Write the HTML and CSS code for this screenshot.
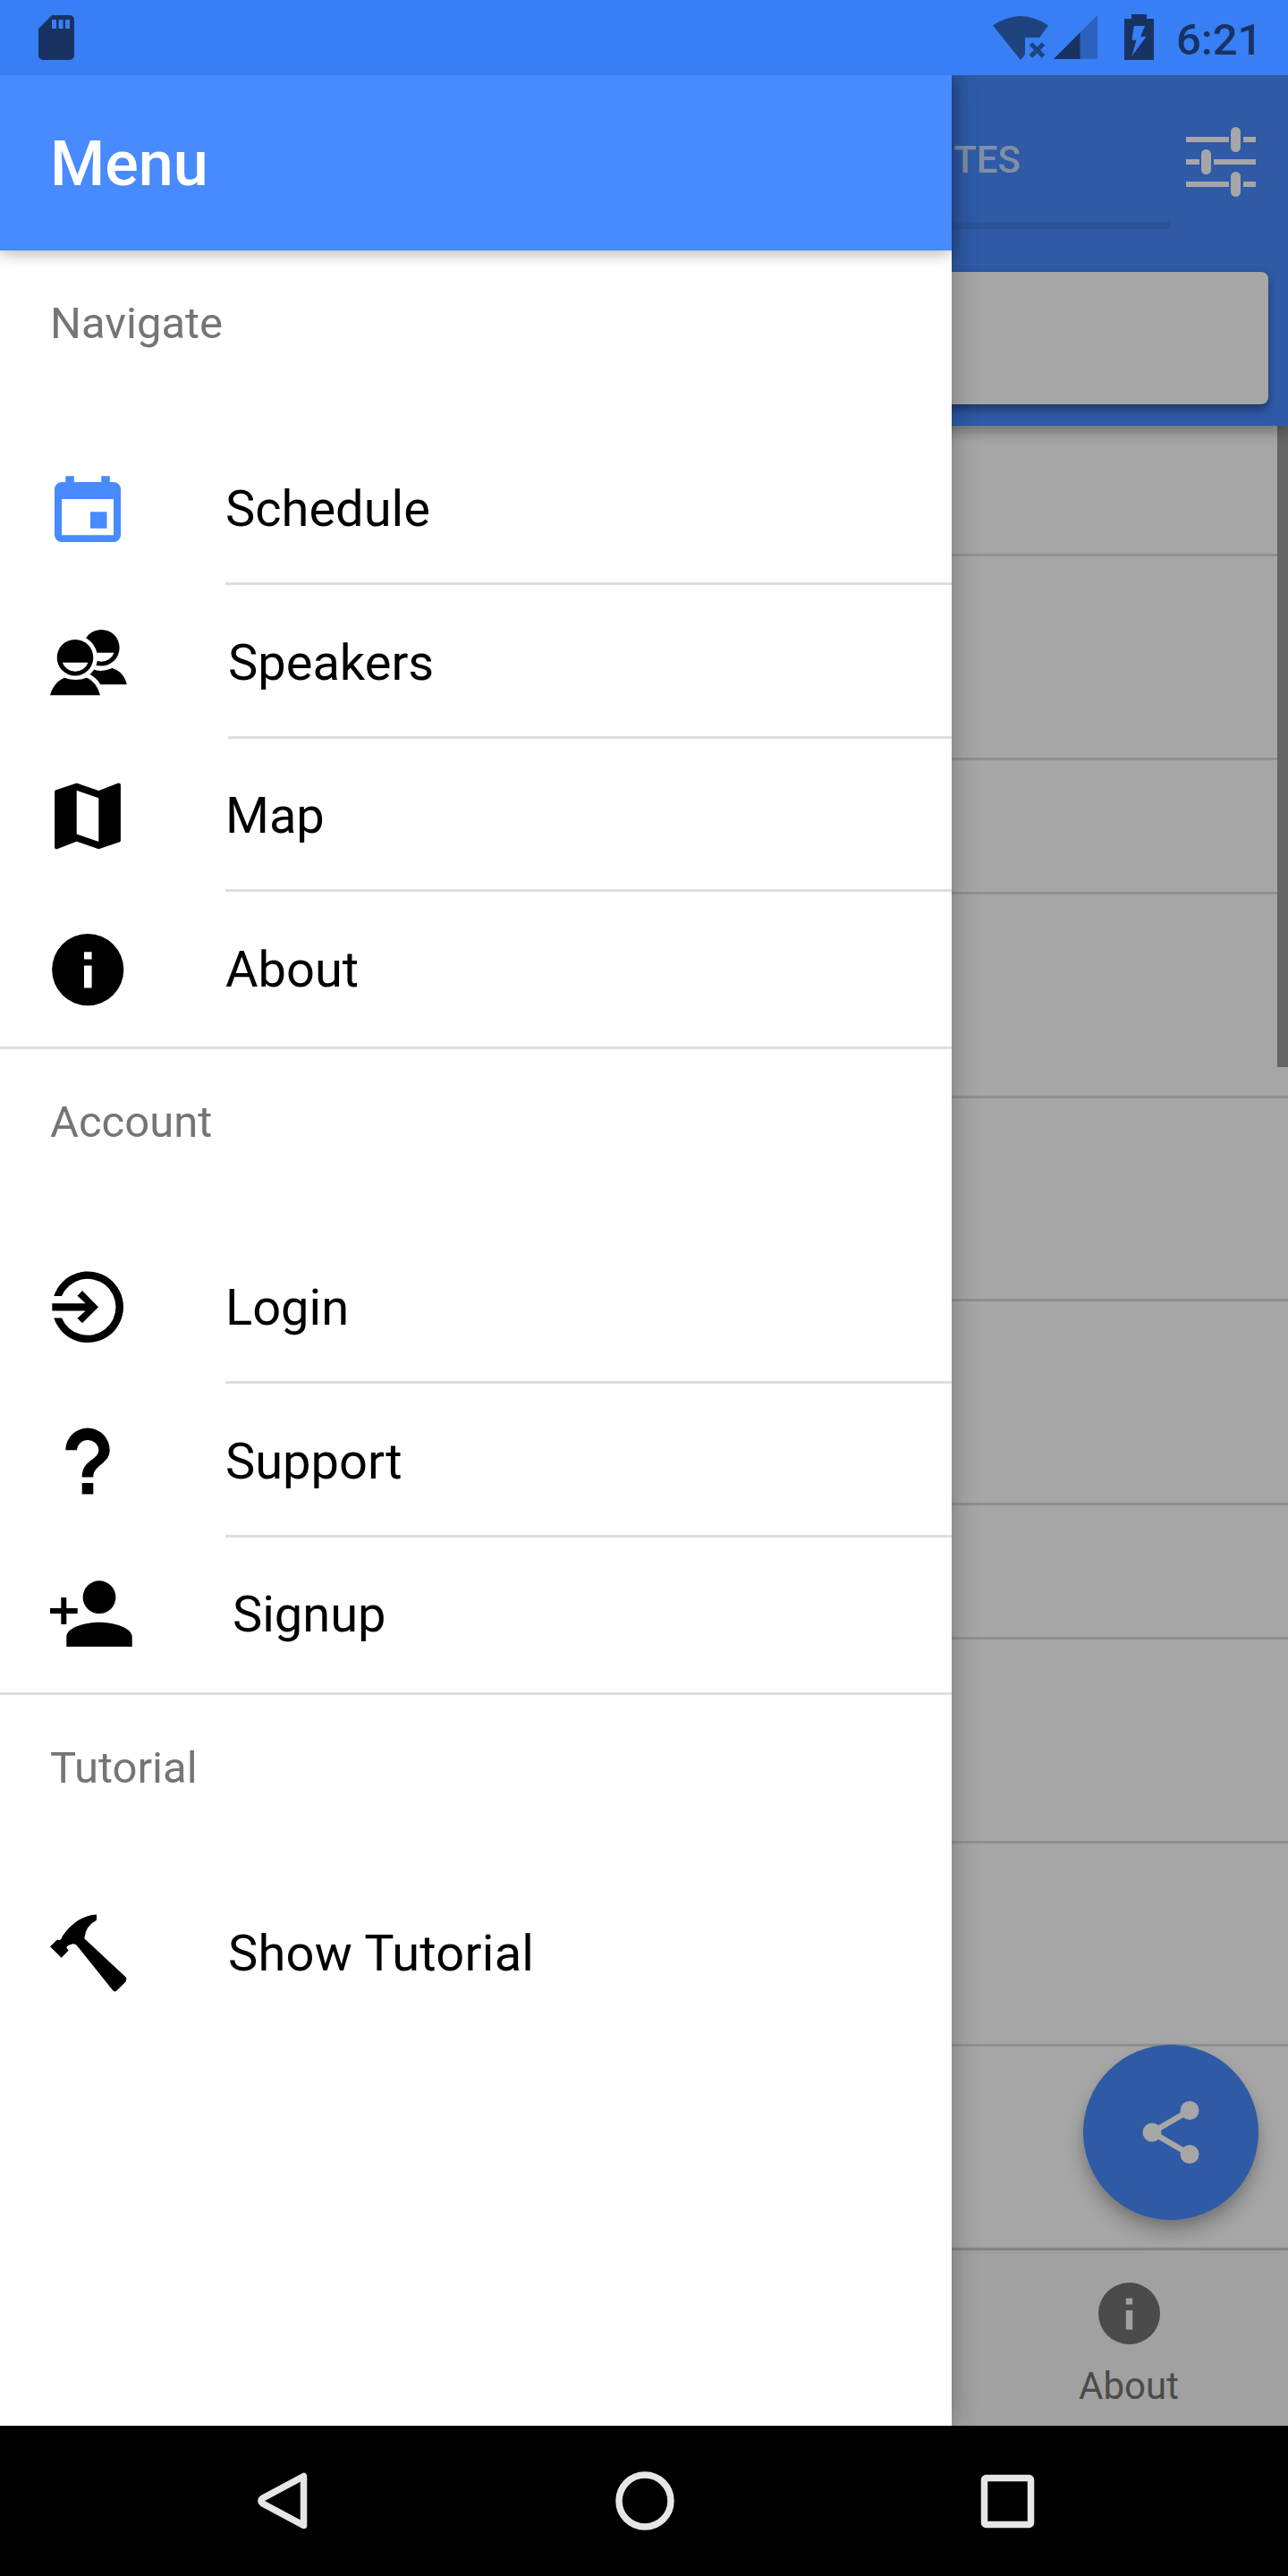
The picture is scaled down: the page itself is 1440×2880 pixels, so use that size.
FILE: index.html
```html
<!DOCTYPE html>
<html lang="en">
<head>
<meta charset="utf-8">
<title>Menu</title>
<link rel="stylesheet" href="styles.css">
</head>
<body>
<header class="status">
  <svg class="status-sd" width="40" height="50" viewBox="0 0 40 50"><path fill-rule="evenodd" d="M15 0H35a5 5 0 0 1 5 5V45a5 5 0 0 1-5 5H5a5 5 0 0 1-5-5V15zM15 5v10h5V5zM22.500 5v10h5V5zM30 5v10h5V5z"/></svg>
  <svg class="status-icons" width="182" height="52" viewBox="0 0 182 52">
    <path fill="#1e437f" d="M0 12.500Q31-8.500 62 12.500L52 26H36V45L31 51z"/>
    <path stroke="#1e437f" stroke-width="5" fill="none" d="M42.500 33L56.500 47M56.500 33L42.500 47"/>
    <path fill="#2b62bd" d="M117 1V50H68z"/>
    <path fill="#183262" d="M97.500 20.500V50H68z"/>
    <path fill="#183262" fill-rule="evenodd" d="M147 5h8V0h17v5h8V51h-33zM157.700 13L155.500 28.700H160.500L155.500 46.500 171.500 25H165L170 13z"/>
  </svg>
  <span class="status-time">6:21</span>
</header>

<div class="stage">
  <main class="page">
    <div class="page-header">
      <div class="toolbar">
        <div class="segment"><span>FAVORITES</span></div>
        <svg width="78" height="78" viewBox="0 0 78 78" fill="#fff"><path d="M0 11h48v6H0zM64 11h14v6H64zM0 36h15v6H0zM31 36h47v6H31zM0 61h48v6H0zM64 61h14v6H64z"/><rect x="50" y="0" width="11" height="28" rx="5.500"/><rect x="17" y="25" width="11" height="28" rx="5.500"/><rect x="50" y="50" width="11" height="28" rx="5.500"/></svg>
      </div>
      <div class="search"></div>
    </div>
    <div class="sessions">
      <div class="session first"></div>
      <div class="session"></div>
      <div class="session divider"></div>
      <div class="session"></div>
      <div class="session"></div>
      <div class="session"></div>
      <div class="session divider"></div>
      <div class="session"></div>
      <div class="session"></div>
      <div class="scrollbar"></div>
      <div class="fab"><svg width="64" height="70" viewBox="0 0 64 70"><path d="M53 10.500L11 35 53 59.500" fill="none" stroke="#fff" stroke-width="6.500"/><g fill="#fff"><circle cx="53" cy="10.500" r="10.500"/><circle cx="11" cy="35" r="10.500"/><circle cx="53" cy="59.500" r="10.500"/></g></svg></div>
    </div>
    <div class="tabs">
      <div class="tab">
        <svg width="69" height="69" viewBox="2 4 80 80"><path fill="#737373" fill-rule="evenodd" d="M42 4a40 40 0 1 1 0 80a40 40 0 1 1 0-80zM37.700 24.200v8.300h8.600v-8.300zM37.700 40v25h8.600V40z"/></svg>
        <span>About</span>
      </div>
    </div>
  </main>
  <div class="backdrop"></div>

  <nav class="drawer">
    <div class="drawer-title">Menu</div>
    <div class="group">
      <div class="label">Navigate</div>
      <div class="item active">
        <svg class="icon" viewBox="0 0 84 84"><path fill-rule="evenodd" d="M17.300 7.300h9.500V14h30.400V7.300h9.600V14H71a8 8 0 0 1 8 8V73a8 8 0 0 1-8 8H13a8 8 0 0 1-8-8V22a8 8 0 0 1 8-8h4.300zM13 33V73.200H71V33zM45 47.300h18.500v18.500H45z"/></svg>
        <div class="text">Schedule</div>
      </div>
      <div class="item">
        <svg class="icon wide" viewBox="0 0 87 84"><path fill-rule="evenodd" d="M57.300 6.900a20.300 20.300 0 1 1 0 40.600a20.300 20.300 0 1 1 0-40.600zM43 32.800H71.600A15.300 15.300 0 0 1 43 32.800zM47.500 51Q57.500 55.200 69.500 50C79 53 84 60 85.700 68.200H40V57z"/><path fill="#fff" stroke="#fff" stroke-width="10" d="M16 60.700Q28.500 65.500 41 60.700C49 64.500 53.500 71 56 80.200V86H0V80.200C2.500 71 8 64 16 60.700z"/><circle fill="#fff" cx="28" cy="38.200" r="25"/><path fill-rule="evenodd" d="M28 17.900a20.300 20.300 0 1 1 0 40.600a20.300 20.300 0 1 1 0-40.600zM13.800 43.700H42.500A15.300 15.300 0 0 1 13.800 43.700zM16 60.700Q28.500 65.500 41 60.700C49 64.500 53.500 71 56 80.200H0C2.500 71 8 64 16 60.700z"/></svg>
        <div class="text">Speakers</div>
      </div>
      <div class="item">
        <svg class="icon" viewBox="0 0 84 84"><path transform="translate(-7.200 -4.800) scale(4.100)" d="M20.500 3l-.16.03L15 5.100 9 3 3.360 4.900c-.21.070-.36.250-.36.480V20.500c0 .28.220.5.500.5l.16-.03L9 18.900l6 2.100 5.640-1.900c.21-.07.360-.25.360-.48V3.500c0-.28-.22-.5-.5-.5zM15 19l-6-2.110V5l6 2.110V19z"/></svg>
        <div class="text">Map</div>
      </div>
      <div class="item">
        <svg class="icon" viewBox="0 0 84 84"><path fill-rule="evenodd" d="M42.200 4a40 40 0 1 1 0 80.200a40 40 0 1 1 0-80.200zM38 24.200v8.300h8.600v-8.300zM38 39.500v25h8.600v-25z"/></svg>
        <div class="text">About</div>
      </div>
    </div>
    <div class="group">
      <div class="label">Account</div>
      <div class="item">
        <svg class="icon" viewBox="0 0 84 84"><path d="M4.300 31A39.800 39.800 0 1 1 4.300 55.600H13A31.500 31.500 0 1 0 13 31z"/><path d="M2.300 39.200H39.700L30.500 30.700 36 25 54 43.300 36 61.300 30.500 55.800 39.700 47.400H2.300z"/></svg>
        <div class="text">Login</div>
      </div>
      <div class="item">
        <svg class="icon" viewBox="0 0 84 84"><path d="M35.700 61.500C35.700 41.500 54.300 43 54.300 31A12.200 12.200 0 0 0 30 31.200H17.300A24.700 24.700 0 0 1 66.700 31.200C66.700 46.500 48.300 47.500 48.300 61.500zM35.700 68h12.600v12.500H35.700z"/></svg>
        <div class="text">Support</div>
      </div>
      <div class="item">
        <svg class="icon wider" viewBox="0 0 92 84"><circle cx="55" cy="24.700" r="18.400"/><path d="M18.300 80V69C18.300 58 41 52.700 55 52.700S91.700 58 91.700 69V80zM0 37H12.300V25h6V37H30.700v6H18.300V55h-6V43H0z"/></svg>
        <div class="text">Signup</div>
      </div>
    </div>
    <div class="group">
      <div class="label">Tutorial</div>
      <div class="item">
        <svg class="icon wide" viewBox="0 0 87 84"><path transform="translate(-6 -18.500) scale(.33333)" d="M174 57V76Q137 94 133 137L272 267Q277 275 272 282L241 313Q235 318 229 312L107 160Q102 154 92 156Q75 159 73 169L80 177 56 202 18 164 42 141 48 143Q57 142 59 130Q107 60 174 57z"/></svg>
        <div class="text spaced">Show Tutorial</div>
      </div>
    </div>
  </nav>
</div>

<footer class="nav">
  <div><svg width="56" height="66" viewBox="0 0 56 66"><path d="M51.500 5.500V60.500L5.800 36Q2 33 5.800 30z"/></svg></div>
  <div><svg width="66" height="66" viewBox="0 0 66 66"><circle cx="33" cy="33" r="29"/></svg></div>
  <div><svg width="59" height="59" viewBox="0 0 59 59"><rect x="3.500" y="3.500" width="52" height="52" rx="2"/></svg></div>
</footer>
</body>
</html>
```

FILE: styles.css
```css
* { box-sizing: border-box; }

body {
  margin: 0;
  width: 1440px;
  height: 2880px;
  display: flex;
  flex-direction: column;
  overflow: hidden;
  font-family: Roboto, "Liberation Sans", sans-serif;
  background: #000;
}

svg { display: block; overflow: visible; flex: none; }

/* system status bar */
.status {
  height: 84px;
  flex: none;
  display: flex;
  align-items: flex-start;
  padding: 16px 34px 0 43px;
  background: #387ef5;
  color: #183262;
}
.status-sd { fill: #183262; margin-top: 1px; }
.status-icons { margin-left: auto; }
.status-time {
  width: 91px;
  margin-left: 23px;
  font-size: 49px;
  font-weight: 500;
  line-height: 57px;
  white-space: nowrap;
}

/* the app: page, backdrop and drawer share one grid cell */
.stage {
  height: 2628px;
  flex: none;
  display: grid;
  grid-template: 100% / 100%;
  overflow: hidden;
}
.page, .backdrop, .drawer { grid-area: 1 / 1; }

.page {
  display: flex;
  flex-direction: column;
  background: #fff;
}
.page-header {
  height: 392px;
  flex: none;
  background: #488aff;
  box-shadow: 0 7px 14px rgba(0, 0, 0, .3);
  z-index: 1;
}
.toolbar {
  height: 196px;
  display: flex;
  align-items: center;
  justify-content: flex-end;
  padding: 0 36px 2px 0;
}
.segment {
  width: 644px;
  height: 148px;
  margin: 1px 18px 0 0;
  padding: 46px 167px 0 0;
  border-bottom: 8px solid rgba(0, 0, 0, .07);
  text-align: right;
  font-size: 42px;
  font-weight: 500;
  line-height: 50px;
  color: rgba(255, 255, 255, .7);
}
.search {
  height: 148px;
  margin: 24px 22px 0;
  border-radius: 8px;
  background: #fff;
  box-shadow: 0 7px 9px rgba(0, 0, 0, .3), 0 0 10px rgba(0, 0, 0, .1);
}

.sessions { position: relative; flex: 1; }
.session { height: 227.5px; border-bottom: 3.500px solid #dedede; }
.session.first { height: 146px; }
.session.divider { height: 150.5px; }
.scrollbar {
  position: absolute;
  top: 0;
  right: 0;
  width: 12px;
  height: 717px;
  background: #9c9c9c;
}
.fab {
  position: absolute;
  right: 33px;
  bottom: 32px;
  width: 196px;
  height: 196px;
  border-radius: 50%;
  display: flex;
  align-items: center;
  justify-content: center;
  background: #488aff;
  box-shadow: 0 14px 21px rgba(0, 0, 0, .24), 0 5px 10px rgba(0, 0, 0, .08);
}

.tabs {
  height: 198px;
  flex: none;
  display: flex;
  justify-content: flex-end;
  background: #f8f8f8;
  box-shadow: 0 -1px 2px rgba(0, 0, 0, .25);
  border-top: 2px solid #c8c8c8;
}
.tab {
  width: 360px;
  display: flex;
  flex-direction: column;
  align-items: center;
  padding: 36px 0 0 4px;
  font-size: 42px;
  line-height: 50px;
  color: #737373;
}
.tab span { margin-top: 22px; }

.backdrop { background: rgba(0, 0, 0, .35); z-index: 2; }

/* side menu */
.drawer {
  width: 1064px;
  background: #fff;
  box-shadow: 0 0 28px rgba(0, 0, 0, .3);
  z-index: 3;
}
.drawer-title {
  height: 196px;
  padding: 0 56px;
  font-size: 70px;
  font-weight: 500;
  line-height: 198px;
  color: #fff;
  background: #488aff;
  box-shadow: 0 4px 16px rgba(0, 0, 0, .28);
}
.group + .group { border-top: 3px solid #dedede; }
.label {
  height: 203px;
  padding: 53px 56px 0;
  font-size: 49px;
  line-height: 58px;
  color: #757575;
}
.item {
  height: 171.5px;
  display: flex;
  align-items: flex-start;
  padding-left: 56px;
}
.item:last-child { height: 172.5px; }
.item .icon {
  width: 84px;
  height: 84px;
  margin: 42px 112px 0 0;
}
.item .icon.wide { width: 87px; }
.item .icon.wider { width: 92px; }
.item.active .icon { fill: #488aff; }
.text {
  flex: 1;
  height: 171px;
  border-bottom: 3px solid #dedede;
  font-size: 56px;
  line-height: 172px;
  color: #000;
}
.text.spaced { letter-spacing: .25px; }
.item:last-child .text { border-bottom: 0; }

/* system navigation bar */
.nav {
  flex: 1;
  display: flex;
  justify-content: center;
  padding-left: 2px;
  background: #000;
}
.nav div {
  width: 405px;
  display: flex;
  align-items: center;
  justify-content: center;
}
.nav svg { fill: none; stroke: #e6e6e6; stroke-width: 7.500; stroke-linejoin: round; }
```
